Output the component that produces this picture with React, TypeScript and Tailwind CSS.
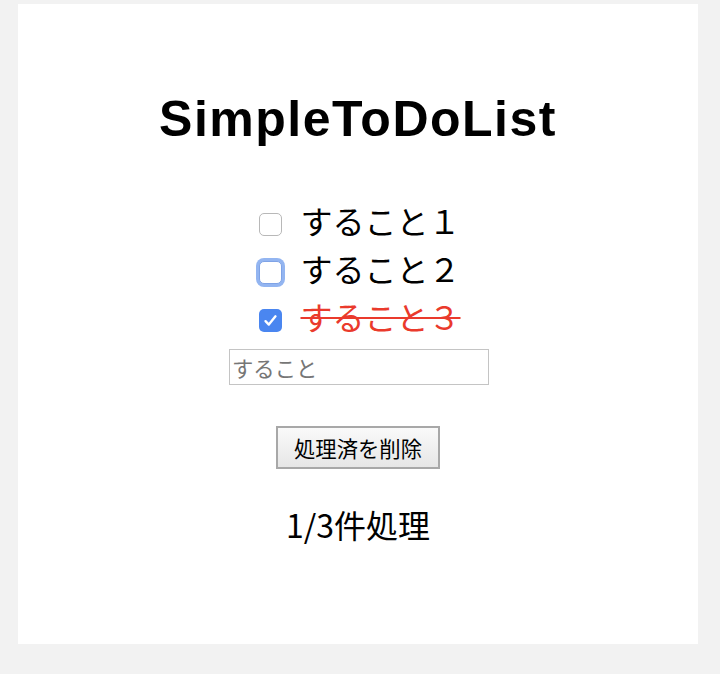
import React from "react";

const jp = { fontFamily: '"Noto Sans CJK JP", "Noto Sans", sans-serif' };

function Box({ state }: { state: "off" | "focus" | "on" }) {
  if (state === "on") {
    return (
      <div className="w-[23px] h-[23px] rounded-[5px] bg-[#4a86f0] flex items-center justify-center">
        <svg width="19" height="19" viewBox="0 0 16 16" fill="none">
          <path d="M3.8 8.6 L6.6 11.4 L12.2 4.5" stroke="white" strokeWidth="2" strokeLinecap="round" strokeLinejoin="round" />
        </svg>
      </div>
    );
  }
  if (state === "focus") {
    return (
      <div className="w-[23px] h-[23px] rounded-[5px] bg-white border border-[#7fa3e6] shadow-[0_0_0_3px_#93b5f1]" />
    );
  }
  return <div className="w-[23px] h-[23px] rounded-[5px] bg-white border border-[#b8b8b8]" />;
}

export default function App() {
  const items: { t: string; s: "off" | "focus" | "on" }[] = [
    { t: "すること１", s: "off" },
    { t: "すること２", s: "focus" },
    { t: "すること３", s: "on" },
  ];
  return (
    <div className="w-full h-[674px] bg-[#f2f2f2] pl-[18px] pt-[4px]">
      <div className="w-[680px] h-[640px] bg-white flex flex-col items-center">
        <h1
          className="pt-[91px] text-[50px] leading-[48px] font-bold text-black tracking-[1.5px]"
          style={{ fontFamily: '"Liberation Sans", Arial, sans-serif' }}
        >
          SimpleToDoList
        </h1>
        <ul className="mt-[57px] flex flex-col items-start ml-[4px]">
          {items.map((it) => (
            <li key={it.t} className="h-[48px] flex items-center gap-[18px]">
              <Box state={it.s} />
              <span
                className={
                  "text-[32px] leading-[48px] -mt-[9px] " +
                  (it.s === "on" ? "text-[#ea3a2c] line-through decoration-[#ea3a2c] decoration-2" : "text-black")
                }
                style={jp}
              >
                {it.t}
              </span>
            </li>
          ))}
        </ul>
        <input
          className="mt-[5px] ml-[2px] w-[260px] h-[36px] border border-[#c4c4c4] px-[2px] text-[21.33px] text-black placeholder:text-[#767676] outline-none"
          style={jp}
          placeholder="すること"
        />
        <button
          className="mt-[41px] w-[164px] h-[43px] border-2 border-[#a8a8a8] bg-gradient-to-b from-[#fafafa] to-[#e6e6e6] text-[21.33px] text-black"
          style={jp}
        >
          処理済を削除
        </button>
        <p className="mt-[31px] text-[32px] leading-[48px] text-black" style={jp}>
          1/3件処理
        </p>
      </div>
    </div>
  );
}
